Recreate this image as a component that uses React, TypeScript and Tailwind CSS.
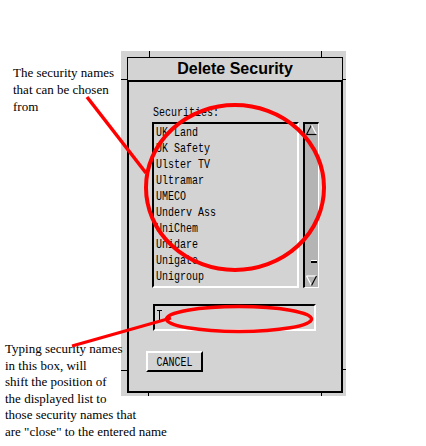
import React from 'react';

const items = [
  'UK Land',
  'UK Safety',
  'Ulster TV',
  'Ultramar',
  'UMECO',
  'Underv Ass',
  'UniChem',
  'Unidare',
  'Unigate',
  'Unigroup',
];

const mono = "font-['Liberation_Mono','DejaVu_Sans_Mono',monospace] text-[13px] text-black";
const serif = "font-['Liberation_Serif','Times_New_Roman',serif] text-[13px] text-black";

// X fixed font is narrower than Liberation Mono, squeeze it horizontally
function Fixed({ text, center, className = '' }: { text: string; center?: boolean; className?: string }) {
  return (
    <span
      className={`block w-fit whitespace-pre scale-x-[0.77] ${center ? 'origin-center' : 'origin-left'} ${mono} ${className}`}
    >
      {text}
    </span>
  );
}

export default function App() {
  return (
    <div className="relative w-[426px] h-[446px] bg-white overflow-hidden">
      <div className="pt-[51px] pl-[121px]">
        {/* dialog window */}
        <div className="relative w-[225px] h-[345px] bg-[#d3d3d3] pt-[6px] pl-[6px] pr-[3px] pb-[3px] flex flex-col">
          {/* frame resize ticks */}
          <span className="absolute left-[28px] top-0 w-px h-[6px] bg-black" />
          <span className="absolute left-[200px] top-0 w-px h-[6px] bg-black" />
          <span className="absolute left-[27px] top-[342px] w-px h-[3px] bg-black" />
          <span className="absolute left-[200px] top-[342px] w-px h-[3px] bg-black" />
          <span className="absolute left-0 top-[28px] w-[6px] h-px bg-black" />
          <span className="absolute left-0 top-[319px] w-[6px] h-px bg-black" />
          <span className="absolute left-[222px] top-[28px] w-[3px] h-px bg-black" />
          <span className="absolute left-[222px] top-[318px] w-[3px] h-px bg-black" />

          {/* title */}
          <div className="h-[23px] border-t border-l border-r border-black flex items-center justify-center">
            <span className="font-['Liberation_Sans',Arial,sans-serif] font-bold text-[16px] leading-[22px] text-black">
              Delete Security
            </span>
          </div>

          {/* body */}
          <div className="flex-1 border-2 border-black flex flex-col items-start">
            <div className="mt-[23px] ml-[24px] h-[16px]">
              <Fixed text="Securities:" className="leading-[16px]" />
            </div>

            <div className="mt-[1px] ml-[23px] flex gap-[4px]">
              <div className="w-[147px] h-[166px] border-2 border-t-black border-l-black border-r-white border-b-white pt-[1px] pl-[2px]">
                {items.map((it) => (
                  <Fixed key={it} text={it} className="h-[16px] leading-[16px]" />
                ))}
              </div>
              <div className="w-[16px] h-[166px] border-l-2 border-t-2 border-l-black border-t-black border-r border-b border-r-white border-b-white bg-[#b4b4b4] flex flex-col justify-between">
                <svg width="13" height="12" viewBox="0 0 13 12">
                  <path d="M6.5 1 L1.5 10.5" stroke="#000" strokeWidth="1.2" fill="none" />
                  <path d="M6.5 1 L11.5 10.5" stroke="#fff" strokeWidth="1.2" fill="none" />
                  <path d="M1.5 10.5 L11.5 10.5" stroke="#000" strokeWidth="1.2" fill="none" />
                </svg>
                <div className="flex flex-col gap-[12px]">
                  <div className="ml-[6px] w-[6px] flex flex-col">
                    <span className="h-px bg-white" />
                    <span className="h-[2px] bg-black" />
                  </div>
                  <svg width="13" height="12" viewBox="0 0 13 12">
                    <path d="M1.5 1 L11.5 1" stroke="#fff" strokeWidth="1.2" fill="none" />
                    <path d="M1.5 1 L6.5 10.5" stroke="#fff" strokeWidth="1.2" fill="none" />
                    <path d="M11.5 1 L6.5 10.5" stroke="#000" strokeWidth="1.2" fill="none" />
                  </svg>
                </div>
              </div>
            </div>

            <div className="mt-[16px] ml-[24px] w-[163px] h-[27px] border-2 border-t-black border-l-black border-r-white border-b-white">
              <svg className="ml-[2px] mt-[4px]" width="5" height="12" viewBox="0 0 5 12">
                <path d="M0 0.5 H5 M2.5 0 V12 M0 11.5 H5" stroke="#000" strokeWidth="1" fill="none" />
              </svg>
            </div>

            <div className="mt-[20px] ml-[17px] w-[57px] h-[21px] border-2 border-t-white border-l-white border-r-black border-b-black flex items-center justify-center">
              <Fixed text="CANCEL" center className="leading-[17px] pt-[1px]" />
            </div>
          </div>
        </div>
      </div>

      {/* annotations */}
      <div className={`absolute left-[13px] top-[64px] leading-[17px] ${serif}`}>
        The security names
        <br />
        that can be chosen
        <br />
        from
      </div>
      <div className={`absolute left-[5px] top-[341px] leading-[16.6px] whitespace-nowrap ${serif}`}>
        Typing security names
        <br />
        in this box, will
        <br />
        shift the position of
        <br />
        the displayed list to
        <br />
        those security names that
        <br />
        are "close" to the entered name
      </div>

      <svg className="absolute left-0 top-0 pointer-events-none" width="426" height="446" viewBox="0 0 426 446">
        <ellipse cx="235" cy="187.5" rx="89" ry="82.5" stroke="#ff0000" strokeWidth="4" fill="none" />
        <ellipse cx="239" cy="319" rx="72.5" ry="12.5" stroke="#ff0000" strokeWidth="3.5" fill="none" />
        <line x1="87" y1="97" x2="146" y2="173" stroke="#ff0000" strokeWidth="3.5" />
        <line x1="72" y1="346" x2="171" y2="318" stroke="#ff0000" strokeWidth="3" />
      </svg>
    </div>
  );
}
